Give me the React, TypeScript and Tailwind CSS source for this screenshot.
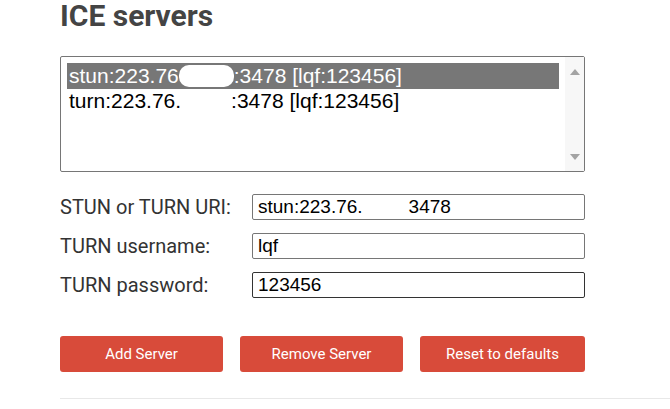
export default function App() {
  const fields = [
    { label: "STUN or TURN URI:", value: "uri", border: "border-[#767676]" },
    { label: "TURN username:", value: "user", border: "border-[#767676]" },
    { label: "TURN password:", value: "pass", border: "border-[#333]" },
  ];

  return (
    <div className="w-[670px] h-[409px] bg-white overflow-hidden">
      <div className="pl-[60px]">
        <h2 className="font-['Roboto',sans-serif] font-bold text-[30px] leading-[31px] text-[#444]">
          ICE servers
        </h2>

        {/* server list */}
        <div className="mt-[25px] w-[525px] h-[116px] border border-[#767676] rounded-[2px] flex font-['Liberation_Sans',Arial,sans-serif] text-[21px]">
          <div className="flex-1 pt-[6px] pl-[6px] pr-[6px]">
            <div className="h-[26px] leading-[26px] bg-[#777] text-white pl-[2px] whitespace-nowrap">
              stun:223.76
              <span className="inline-block align-middle w-[55px] h-[22px] bg-white rounded-[10px] -mt-[3px]"></span>
              :3478 [lqf:123456]
            </div>
            <div className="h-[23px] leading-[23px] text-black pl-[2px] whitespace-nowrap">
              turn:223.76.
              <span className="inline-block w-[50px]"></span>
              :3478 [lqf:123456]
            </div>
          </div>
          <div className="w-[19px] bg-[#f7f7f7] flex flex-col items-center justify-between pt-[12px] pb-[11px]">
            <svg width="10" height="6" viewBox="0 0 10 6">
              <path d="M5 0L10 6H0Z" fill="#a3a3a3" />
            </svg>
            <svg width="10" height="6" viewBox="0 0 10 6">
              <path d="M0 0H10L5 6Z" fill="#a3a3a3" />
            </svg>
          </div>
        </div>

        {/* form */}
        <div className="mt-[22px] flex flex-col gap-[13px]">
          {fields.map((f) => (
            <div key={f.value} className="flex items-center h-[26px]">
              <label className="w-[192px] font-['Roboto',sans-serif] text-[20px] leading-[26px] text-[#333]">
                {f.label}
              </label>
              <div
                className={`w-[333px] h-[26px] border ${f.border} rounded-[2px] pl-[5px] flex items-center font-['Liberation_Sans',Arial,sans-serif] text-[19px] leading-[24px] text-black whitespace-nowrap`}
              >
                {f.value === "uri" && (
                  <>
                    stun:223.76.
                    <span className="inline-block w-[46px]"></span>
                    3478
                  </>
                )}
                {f.value === "user" && "lqf"}
                {f.value === "pass" && "123456"}
              </div>
            </div>
          ))}
        </div>

        {/* buttons */}
        <div className="mt-[38px] flex gap-[17px] w-[525px]">
          <button className="w-[163px] h-[36px] bg-[#d84b3a] rounded-[3px] text-white font-['Roboto',sans-serif] text-[15px]">
            Add Server
          </button>
          <button className="w-[163px] h-[36px] bg-[#d84b3a] rounded-[3px] text-white font-['Roboto',sans-serif] text-[15px]">
            Remove Server
          </button>
          <button className="w-[165px] h-[36px] bg-[#d84b3a] rounded-[3px] text-white font-['Roboto',sans-serif] text-[15px]">
            Reset to defaults
          </button>
        </div>

        <div className="mt-[26px] h-px bg-[#e8e8e8]"></div>
      </div>
    </div>
  );
}
